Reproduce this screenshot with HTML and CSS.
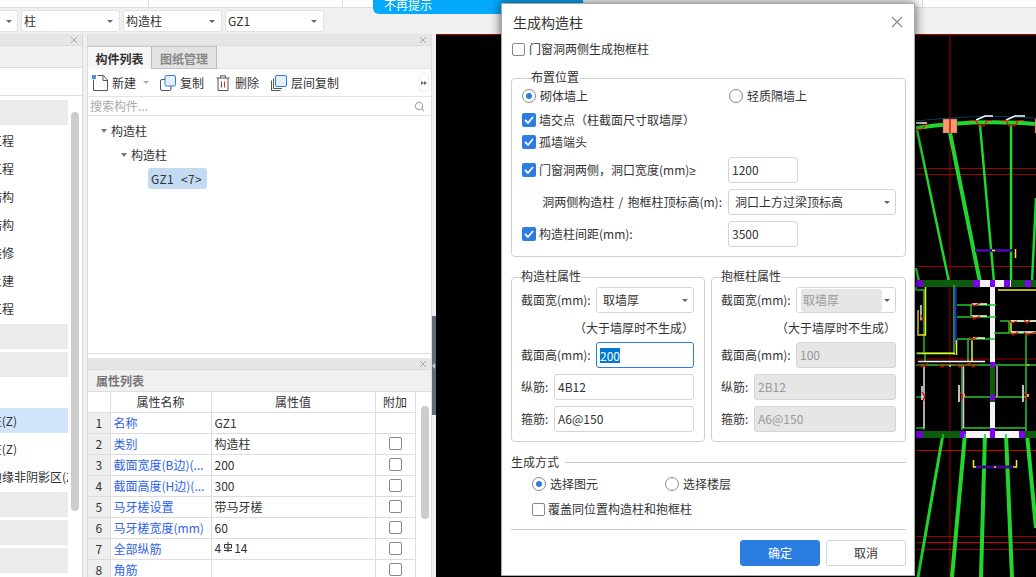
FILE: index.html
```html
<!DOCTYPE html>
<html lang="zh-CN">
<head>
<meta charset="utf-8">
<title>生成构造柱</title>
<link rel="stylesheet" href="styles.css">
</head>
<body>
<div class="page">
  <div class="topstrip">
    <div class="strip-cell strip-a"><span class="strip-text">图层</span></div>
    <div class="strip-cell strip-b"></div>
    <div class="strip-cell strip-c"></div>
    <div class="strip-end"></div>
  </div>
  <div class="banner"><span>不再提示</span></div>

  <div class="selectbar">
    <div class="tsel tsel-first"><i class="arrow"></i></div>
    <div class="tsel"><span>柱</span><i class="arrow"></i></div>
    <div class="tsel"><span>构造柱</span><i class="arrow"></i></div>
    <div class="tsel"><span>GZ1</span><i class="arrow"></i></div>
  </div>

  <div class="main">
    <aside class="leftcol">
      <div class="panelhead"><svg class="x" viewBox="0 0 8 8"><path d="M1 1l6 6M7 1L1 7"/></svg></div>
      <div class="left-tabs"></div>
      <div class="left-tools"></div>
      <div class="left-body">
        <div class="navlist">
          <div class="nav gray"></div>
          <div class="nav"><span>工程</span></div>
          <div class="nav"><span>工程</span></div>
          <div class="nav"><span>结构</span></div>
          <div class="nav"><span>结构</span></div>
          <div class="nav"><span>装修</span></div>
          <div class="nav"><span>土建</span></div>
          <div class="nav"><span>工程</span></div>
          <div class="nav gray"></div>
          <div class="nav gray"></div>
          <div class="nav"></div>
          <div class="nav sel z"><span>柱(Z)</span></div>
          <div class="nav z"><span>柱(Z)</span></div>
          <div class="nav long"><span>边缘非阴影区(Z)</span></div>
          <div class="nav gray"></div>
          <div class="nav gray"></div>
          <div class="nav gray"></div>
        </div>
        <div class="leftscroll"></div>
      </div>
    </aside>

    <section class="midcol">
      <div class="panelhead"><svg class="x" viewBox="0 0 8 8"><path d="M1 1l6 6M7 1L1 7"/></svg></div>
      <div class="tabs">
        <div class="tab on">构件列表</div>
        <div class="tab off">图纸管理</div>
      </div>
      <div class="tools">
        <svg class="ico" viewBox="0 0 16 16"><path class="ln" d="M1.500 4.500V15.500H15.500V5L11.500 .5H5.500"/><path class="ln" d="M11 1V5.500H15"/><rect class="dot" x="0" y="0" width="4" height="4"/></svg>
        <span class="tool t-new">新建</span><i class="arrow tool-arrow"></i>
        <svg class="ico ico-copy" viewBox="0 0 16 16"><rect class="ln" x=".5" y="4.500" width="10.500" height="11" rx="1.500"/><rect class="bl" x="5" y=".5" width="10.500" height="10.500" rx="1.500"/></svg>
        <span class="tool">复制</span>
        <svg class="ico ico-del" viewBox="0 0 14 16"><path class="ln" d="M.5 3H13.500M4.500 3V.8H9.500V3M2 3V15.500H12V3"/><path class="rd" d="M5.500 6.500V12.500M8.500 6.500V12.500"/></svg>
        <span class="tool">删除</span>
        <svg class="ico ico-floor" viewBox="0 0 16 16"><path class="ln" d="M.5 5.500V15.500H9.500M2.500 3.500V13.500H11"/><rect class="bl" x="4.500" y=".5" width="11" height="11" rx="1.500"/></svg>
        <span class="tool">层间复制</span>
        <div class="more"><i></i><i></i></div>
      </div>
      <div class="search">
        <span>搜索构件...</span>
        <svg class="mag" viewBox="0 0 12 12"><circle cx="5.500" cy="5.500" r="4"/><path d="M8.500 8.500L11 11"/></svg>
      </div>
      <div class="tree">
        <div class="tree-row lv1"><i class="arrow"></i><span>构造柱</span></div>
        <div class="tree-row lv2"><i class="arrow"></i><span>构造柱</span></div>
        <div class="tree-row lv3"><span class="leaf">GZ1 &lt;7&gt;</span></div>
      </div>
      <div class="panelhead panelhead-prop"><svg class="x" viewBox="0 0 8 8"><path d="M1 1l6 6M7 1L1 7"/></svg></div>
      <div class="prop-title">属性列表</div>
      <div class="prop-body">
        <table class="props">
          <colgroup><col class="c1"><col class="c2"><col class="c3"><col class="c4"></colgroup>
          <tr class="hd"><th></th><th>属性名称</th><th>属性值</th><th>附加</th></tr>
          <tr><td class="n">1</td><td class="k">名称</td><td class="v">GZ1</td><td></td></tr>
          <tr><td class="n">2</td><td class="k">类别</td><td class="v">构造柱</td><td class="c"><i class="box"></i></td></tr>
          <tr><td class="n">3</td><td class="k">截面宽度(B边)(...</td><td class="v">200</td><td class="c"><i class="box"></i></td></tr>
          <tr><td class="n">4</td><td class="k">截面高度(H边)(...</td><td class="v">300</td><td class="c"><i class="box"></i></td></tr>
          <tr><td class="n">5</td><td class="k">马牙槎设置</td><td class="v">带马牙槎</td><td class="c"><i class="box"></i></td></tr>
          <tr><td class="n">6</td><td class="k">马牙槎宽度(mm)</td><td class="v">60</td><td class="c"><i class="box"></i></td></tr>
          <tr><td class="n">7</td><td class="k">全部纵筋</td><td class="v">4<svg class="rebar" viewBox="0 0 10 10"><path d="M5 0V10M1 8.500H9M1.500 2.500H8.500V6H1.500Z"/></svg>14</td><td class="c"><i class="box"></i></td></tr>
          <tr><td class="n">8</td><td class="k">角筋</td><td class="v"></td><td class="c"><i class="box"></i></td></tr>
        </table>
        <div class="propscroll"></div>
      </div>
    </section>

    <div class="handle">
      <div class="grip"><i></i></div>
    </div>

    <div class="canvas">
      <svg class="cad" viewBox="436 34 600 543" preserveAspectRatio="none">
        <g class="red-d">
          <path d="M436 34.500H1036"/>
          <path d="M950 34V577"/>
          <path d="M916 168.500H1036M916 174.500H1036M916 266.500H1036M916 359H1036M916 536.500H1036M916 549.500H1036"/>
        </g>
        <path class="red-b" d="M916 450.500H1036M916 542.500H1036"/>
        <path class="navy" d="M916 121Q975 114 1036 118"/>
        <g class="g4">
          <path d="M916 128Q975 119 1036 124"/>
          <path d="M950 133L980 282"/>
          <path d="M943 434L918 577" stroke-width="3"/>
          <path d="M965 434L952 577"/>
          <path d="M985 434L981 577"/>
          <path d="M1006 434L1012 577"/>
          <path d="M1027 434L1036 528"/>
        </g>
        <g class="g3">
          <path d="M917 130L949 282"/>
          <path d="M980 125L994 282"/>
          <path d="M1011 125V282"/>
          <path d="M1036 198L1032 282"/>
          <path d="M916 268L919 282"/>
        </g>
        <rect class="salmon" x="943" y="119" width="14" height="14"/>
        <path class="red-v" d="M950 119V133"/>
        <rect class="salmon" x="1035" y="119" width="4" height="14"/>
        <g class="tag">
          <path d="M976 120L985 116H993"/>
          <path d="M1006 120L1015 116H1025"/>
          <path d="M916 123H927"/>
        </g>
        <g class="trap">
          <path d="M969 120.500H976L979 126H984L987 120.500H992"/>
          <path d="M1000 120.500H1006L1009 126H1015L1018 120.500H1024"/>
          <path d="M916 130L922 129L926 124H928"/>
        </g>
        <rect class="dgreen" x="916" y="280" width="120" height="7"/>
        <rect class="purple" x="916" y="280" width="7" height="7"/>
        <rect class="purple" x="973" y="280" width="7" height="7"/>
        <rect class="white" x="980" y="280" width="31" height="7"/>
        <rect class="purple" x="990" y="280" width="5" height="10"/>
        <rect class="purple" x="1004" y="280" width="6" height="7"/>
        <rect class="purple" x="1025" y="280" width="6" height="7"/>
        <path class="dpur" d="M975 250.500H1012"/>
        <path class="yel" d="M1015.500 249V258M992 250.500H995"/>
        <path class="yel" d="M998 290H1036"/>
        <rect class="white" x="990" y="287" width="5" height="75"/>
        <g class="g2">
          <path d="M957 305H996M957 317H996M971 305V317"/>
          <path d="M957 339H995M968 339V361"/>
          <path d="M1000 321H1036M994 333H1036M1009 321V333"/>
          <path d="M916 287V290H924V353M954 285V355M916 353H954M925 353V362"/>
          <path d="M916 365H1036"/>
          <path d="M924 365V430M962 365V430M1026 365V431"/>
          <path d="M962 397H990M995 397H1026M916 397H924"/>
          <path d="M962 428H1026M916 428H924"/>
          <path d="M1026 333V365"/>
        </g>
        <path class="blue" d="M955.500 287V345"/>
        <path class="yel" d="M925.500 287V335H918V310M956.500 340V355M917 353.500H955M972 340V361M1011 322V333"/>
        <rect class="dgreen" x="990" y="365" width="5" height="37"/>
        <rect class="purple" x="990" y="362" width="5" height="5"/>
        <rect class="purple" x="990" y="395" width="5" height="5"/>
        <rect class="white" x="990" y="402" width="5" height="29"/>
        <path class="pink" d="M963.500 366V428M997 366V397M924 366V428"/>
        <path class="tag" d="M918 361.500H985"/>
        <path class="tag" d="M1011 321H1036M1011 332H1036M971 304H987M971 316H987M973 338H985"/>
        <path class="tag" d="M921 305V320M959 385V402M1023 385V402M922 386V400"/>
        <g class="trap">
          <path d="M917 364L923 367L928 363M938 364L942 367L947 364M955 364L960 367L970 363L973 367L978 364"/>
          <path d="M971 303L974 306L980 303M971 316L974 319L980 316M969 337L972 340L977 337"/>
          <path d="M1009 320L1012 323L1017 321M1024 320L1027 323L1030 320M1010 332L1013 335L1018 332M1024 332L1027 335L1036 332"/>
          <path d="M922 392L925 396L923 401M960 392L963 396L961 401M1024 392L1027 396L1025 401M921 315L923 320L920 321"/>
        </g>
        <path class="orange" d="M964 394V397M1028 364V366M1028 394V397M950 365V367"/>
        <rect class="dgreen" x="916" y="431" width="120" height="7"/>
        <rect class="white" x="966" y="431" width="54" height="7"/>
        <rect class="purple" x="916" y="431" width="7" height="7"/>
        <rect class="purple" x="960" y="431" width="6" height="7"/>
        <rect class="purple" x="990" y="428" width="5" height="10"/>
        <rect class="purple" x="1019" y="431" width="6" height="7"/>
        <path class="dpur" d="M976 467H1012"/>
        <path class="yel" d="M973.500 460V467H976M1016.500 460V467H1013M994 467H996"/>
        <path class="g2" d="M943 434V438M965 434V438M985 434V438M1006 434V438"/>
      </svg>
    </div>
  </div>

  <div class="dialog">
    <div class="dlg-title">
      <span>生成构造柱</span>
      <svg class="dlg-x" viewBox="0 0 12 12"><path d="M1 1L11 11M11 1L1 11"/></svg>
    </div>
    <label class="line top-check"><i class="box"></i><span>门窗洞两侧生成抱框柱</span></label>

    <div class="group g-place">
      <div class="legend">布置位置</div>
      <div class="row r-radio">
        <div class="radio-item w207"><i class="radio on"></i><span>砌体墙上</span></div>
        <div class="radio-item"><i class="radio"></i><span>轻质隔墙上</span></div>
      </div>
      <div class="row r-c1"><i class="box on"><svg viewBox="0 0 14 14"><path d="M3 7l3 3 5-6"/></svg></i><span>墙交点（柱截面尺寸取墙厚）</span></div>
      <div class="row r-c2"><i class="box on"><svg viewBox="0 0 14 14"><path d="M3 7l3 3 5-6"/></svg></i><span>孤墙端头</span></div>
      <div class="row r-in">
        <div class="w206"><i class="box on"><svg viewBox="0 0 14 14"><path d="M3 7l3 3 5-6"/></svg></i><span>门窗洞两侧，洞口宽度(mm)<span class="ge">≥</span></span></div>
        <div class="field w70">1200</div>
      </div>
      <div class="row r-in">
        <div class="w206 right">洞两侧构造柱 / 抱框柱顶标高(m):</div>
        <div class="field sel w168"><span>洞口上方过梁顶标高</span><i class="arrow"></i></div>
      </div>
      <div class="row r-in">
        <div class="w206"><i class="box on"><svg viewBox="0 0 14 14"><path d="M3 7l3 3 5-6"/></svg></i><span>构造柱间距(mm):</span></div>
        <div class="field w70">3500</div>
      </div>
    </div>

    <div class="pair">
      <div class="group g-prop g-left">
        <div class="legend">构造柱属性</div>
        <div class="row r-p1"><div class="lab75">截面宽(mm):</div><div class="field sel grow sel-pad"><span>取墙厚</span><i class="arrow"></i></div></div>
        <div class="hint">（大于墙厚时不生成）</div>
        <div class="row r-in"><div class="lab75">截面高(mm):</div><div class="field grow focus"><span class="picked">200</span></div></div>
        <div class="row r-in"><div class="lab33">纵筋:</div><div class="field grow">4B12</div></div>
        <div class="row r-in"><div class="lab33">箍筋:</div><div class="field grow">A6@150</div></div>
      </div>
      <div class="group g-prop g-right">
        <div class="legend">抱框柱属性</div>
        <div class="row r-p1"><div class="lab75">截面宽(mm):</div><div class="field sel grow off-sel"><span class="off-inner">取墙厚</span><i class="arrow"></i></div></div>
        <div class="hint">（大于墙厚时不生成）</div>
        <div class="row r-in"><div class="lab75">截面高(mm):</div><div class="field grow off">100</div></div>
        <div class="row r-in"><div class="lab33">纵筋:</div><div class="field grow off">2B12</div></div>
        <div class="row r-in"><div class="lab33">箍筋:</div><div class="field grow off">A6@150</div></div>
      </div>
    </div>

    <div class="how"><span>生成方式</span><i class="rule"></i></div>
    <div class="row r-how">
      <div class="radio-item w133"><i class="radio on"></i><span>选择图元</span></div>
      <div class="radio-item"><i class="radio"></i><span>选择楼层</span></div>
    </div>
    <div class="row r-over"><i class="box"></i><span>覆盖同位置构造柱和抱框柱</span></div>
    <div class="divider"></div>
    <div class="actions">
      <div class="btn primary">确定</div>
      <div class="btn">取消</div>
    </div>
  </div>
</div>
</body>
</html>
```

FILE: styles.css
```css
* { box-sizing: border-box; }
html, body { margin: 0; padding: 0; }
body {
  width: 1036px;
  height: 577px;
  overflow: hidden;
  font: 12px/16px "Noto Sans CJK SC", "Noto Sans", sans-serif;
  color: #333;
  background: #f0f0f0;
  text-spacing-trim: space-all;
}
i { display: block; font-style: normal; }
.page { position: relative; width: 1036px; height: 577px; overflow: hidden; display: flex; flex-direction: column; }

/* top strip */
.topstrip { height: 8px; flex: none; display: flex; background: #fff; border-bottom: 1px solid #ddd; overflow: hidden; }
.strip-cell { height: 7px; border-right: 1px solid #ddd; overflow: hidden; }
.strip-a { width: 149px; padding-left: 23px; }
.strip-b { width: 194px; }
.strip-c { width: 580px; padding-left: 536px; }
.strip-end { flex: 1; }
.strip-text { display: block; margin-top: -14px; }
.banner {
  position: absolute; left: 373px; top: 0; width: 210px; height: 14px;
  background: #03a9fb; border-bottom-left-radius: 6px; color: #fff;
  padding-left: 11px; overflow: hidden; font-size: 12px; line-height: 9px;
}

/* select bar */
.selectbar { height: 26px; flex: none; display: flex; gap: 3px; padding-top: 2px; }
.tsel {
  position: relative; width: 99px; height: 22px; background: #fff; border: 1px solid #e2e2e2;
  border-radius: 3px; padding-left: 2px; line-height: 20px; display: flex; align-items: center; justify-content: space-between; padding-right: 6px;
}
.tsel-first { width: 18px; border-left: 0; border-radius: 0 3px 3px 0; justify-content: flex-end; margin-right: 0; padding-right: 5px; }
.arrow { width: 0; height: 0; border-left: 3px solid transparent; border-right: 3px solid transparent; border-top: 3px solid #666; }

/* main */
.main { flex: 1; display: flex; min-height: 0; }
.leftcol { width: 83px; flex: none; margin-right: 4px; background: #fff; border-right: 1px solid #d8d8d8; overflow: hidden; }
.panelhead { height: 12px; background: #e6e6e6; border-bottom: 1px solid #ddd; display: flex; justify-content: flex-end; align-items: center; padding-right: 4px; }
.x { width: 8px; height: 8px; fill: none; stroke: #aaa; stroke-width: 1; }
.left-tabs { height: 22px; background: #f0f0f0; border-bottom: 1px solid #ddd; }
.left-tools { height: 28px; background: #fff; border-bottom: 1px solid #ddd; }
.left-body { display: flex; padding-top: 4px; gap: 3px; }
.navlist { width: 68px; flex: none; display: flex; flex-direction: column; gap: 3px; overflow: hidden; }
.nav { height: 25px; flex: none; display: flex; justify-content: flex-end; align-items: center; padding-right: 54px; white-space: nowrap; overflow: hidden; }
.nav.gray { background: #ebebeb; }
.nav.z { padding-right: 51px; }
.nav.sel { background: #d0e4fb; }
.nav.long { justify-content: flex-start; padding: 0 0 0 0; }
.nav.long span { margin-left: -10px; }
.leftscroll { width: 8px; height: 399px; margin-top: 12px; background: #ccc; border-radius: 4px; flex: none; }

/* mid column */
.midcol { width: 345px; flex: none; background: #fff; display: flex; flex-direction: column; overflow: hidden; border-left: 1px solid #ddd; border-right: 1px solid #ddd; }
.tabs { height: 23px; flex: none; display: flex; background: #f0f0f0; border-bottom: 1px solid #e2e2e2; }
.tab { width: 64px; height: 23px; font-weight: 700; text-align: center; line-height: 23px; }
.tab.on { background: #f6f6f6; border-top: 1px solid #ccc; border-right: 1px solid #bbb; }
.tab.off { background: #e2e2e2; color: #888; border-top: 1px solid #c4c4c4; border-right: 1px solid #bbb; border-bottom: 1px solid #c4c4c4; width: 65px; }
.tools { height: 28px; flex: none; display: flex; align-items: center; padding-left: 4px; border-bottom: 1px solid #e2e2e2; background: #fff; }
.ico { width: 16px; height: 16px; flex: none; fill: none; }
.ln { fill: none; stroke: #555; stroke-width: 1; }
.bl { fill: #e3effc; stroke: #2b7de1; stroke-width: 1; }
.rd { fill: none; stroke: #d22; stroke-width: 1; }
.dot { fill: #4a90e2; }
.tool { margin-left: 4px; line-height: 16px; white-space: nowrap; }
.t-new { margin-left: 4px; }
.tool-arrow { margin-left: 7px; border-top-color: #aaa; }
.ico-copy { margin-left: 11px; }
.ico-del { margin-left: 12px; width: 14px; }
.ico-del + .tool { margin-left: 5px; }
.ico-floor { margin-left: 12px; }
.more { margin-left: auto; margin-right: 2px; width: 10px; height: 19px; border: 1px solid #eee; border-radius: 3px; display: flex; align-items: center; justify-content: center; }
.more i { width: 0; height: 0; border-top: 2.500px solid transparent; border-bottom: 2.500px solid transparent; border-left: 3px solid #666; }
.search { height: 19px; flex: none; display: flex; align-items: center; justify-content: space-between; padding: 0 6px 0 2px; color: #aaa; border-bottom: 1px solid #e2e2e2; }
.mag { width: 11px; height: 11px; fill: none; stroke: #aaa; stroke-width: 1.300; }
.tree { height: 238px; flex: none; border-bottom: 1px solid #ddd; padding-top: 3px; }
.tree-row { display: flex; align-items: center; height: 24px; }
.lv1 { padding-left: 13px; }
.lv2 { padding-left: 33px; }
.tree-row .arrow { border-left-width: 3px; border-right-width: 3px; border-top: 4px solid #777; margin-right: 4px; }
.lv3 { padding-left: 60px; height: 21px; margin-top: 1px; }
.leaf { display: block; width: 59px; height: 21px; line-height: 21px; background: #c3daf3; border-radius: 3px; padding-left: 3px; white-space: pre; word-spacing: 4px; letter-spacing: .3px; }
.panelhead-prop { margin-top: 4px; box-shadow: -1px 0 0 #ddd; }
.prop-title { height: 22px; flex: none; background: #f0f0f0; border-bottom: 1px solid #ddd; padding-left: 8px; line-height: 21px; font-weight: 700; color: #777; }
.prop-body { display: flex; flex: 1; min-height: 0; overflow: hidden; align-items: flex-start; }
.props { width: 327px; flex: none; table-layout: fixed; border-collapse: collapse; }
.c1 { width: 22px; }
.c2 { width: 101px; }
.c3 { width: 164px; }
.c4 { width: 40px; }
.props th, .props td { height: 21px; padding: 0; border: 1px solid #ddd; font-weight: 400; line-height: 16px; white-space: nowrap; overflow: hidden; }
.props tr:first-child th { border-top: 0; height: 20px; }
.props th:first-child, .props td:first-child { border-left: 0; }
.props .n { text-align: center; background: #eee; }
.props .k { color: #2f63ee; padding-left: 3px; }
.props .v { padding-left: 3px; }
.props .c { text-align: center; }
.props .c .box { margin: 0 auto; }
.rebar { display: inline-block; width: 10px; height: 10px; margin: 0 1px 5px 2px; vertical-align: middle; fill: none; stroke: #333; stroke-width: 1; }
.propscroll { width: 8px; height: 113px; flex: none; margin: 14px 0 0 5px; background: #ccc; border-radius: 4px; }

/* handle */
.handle { width: 4px; flex: none; padding-top: 282px; background: #f0f0f0; }
.grip { width: 4px; height: 99px; background: #5f6b76; display: flex; align-items: center; }
.grip i { width: 0; height: 0; border-top: 3px solid transparent; border-bottom: 3px solid transparent; border-right: 3px solid #c5cad0; }

/* canvas */
.canvas { flex: 1; background: #000; overflow: hidden; }
.cad { display: block; width: 600px; height: 543px; fill: none; }
.red-d { stroke: #a00000; stroke-width: 1; fill: none; }
.red-b { stroke: #d00000; stroke-width: 1; fill: none; }
.red-v { stroke: #e03020; stroke-width: 2; }
.navy { stroke: #103a5a; stroke-width: 1; fill: none; }
.g4 { stroke: #21d62e; stroke-width: 4; fill: none; }
.g3 { stroke: #21d62e; stroke-width: 2.500; fill: none; }
.g2 { stroke: #21c62e; stroke-width: 1.500; fill: none; }
.salmon { fill: #ff9a70; stroke: #666; stroke-width: .5; }
.tag { stroke: #fff; stroke-width: 1.500; fill: none; }
.trap { stroke: #f00000; stroke-width: 1.200; fill: none; }
.dgreen { fill: #0b5c0b; }
.purple { fill: #8000f0; }
.white { fill: #f4f4f4; }
.dpur { stroke: #3e0a8e; stroke-width: 3; fill: none; }
.yel { stroke: #f5ee2a; stroke-width: 1.500; fill: none; }
.blue { stroke: #2030c8; stroke-width: 2; fill: none; }
.pink { stroke: #e8b8e8; stroke-width: 1.500; fill: none; }
.orange { stroke: #ff9a40; stroke-width: 2; fill: none; }

/* dialog */
.dialog {
  position: absolute; left: 501px; top: 3px; width: 414px; height: 573px;
  background: #fff; border: 1px solid #aaa; box-shadow: 0 0 10px rgba(0, 0, 0, .65);
  padding: 0 8px 0 9px; display: flex; flex-direction: column;
}
.dlg-title { height: 38px; flex: none; display: flex; align-items: center; justify-content: space-between; padding: 0 3px 3px 2px; font-size: 14px; }
.dlg-x { width: 12px; height: 12px; fill: none; stroke: #888; stroke-width: 1.100; }
.box { width: 13px; height: 13px; flex: none; border: 1px solid #888; border-radius: 2px; background: #fff; }
.box.on { width: 14px; height: 14px; border: 0; background: #2b7de1; border-radius: 2px; }
.box.on svg { display: block; width: 14px; height: 14px; fill: none; stroke: #fff; stroke-width: 1.800; }
.line { display: flex; align-items: center; height: 14px; flex: none; padding-left: 1px; gap: 4px; }
.group { border: 1px solid #d0d0d0; border-radius: 4px; flex: none; }
.legend { width: max-content; height: 16px; margin: -10px 0 0 9px; background: #fff; padding: 0; }
.g-place { margin-top: 22px; height: 179px; padding: 0 9px 9px 10px; }
.g-place .legend { margin-left: -1px; margin-left: 9px; }
.row { display: flex; align-items: center; flex: none; }
.r-radio { height: 20px; margin-top: 1px; }
.radio-item { display: flex; align-items: center; gap: 4px; }
.w207 { width: 207px; }
.w133 { width: 133px; }
.radio { width: 14px; height: 14px; flex: none; border: 1px solid #888; border-radius: 50%; background: #fff; position: relative; display: flex; align-items: center; justify-content: center; }
.radio.on::after { content: ""; width: 6px; height: 6px; border-radius: 50%; background: #2b7de1; }
.r-c1 { height: 20px; margin-top: 4px; gap: 3px; }
.r-c2 { height: 20px; margin-top: 2px; gap: 3px; }
.r-in { height: 26px; margin-top: 6px; }
.r-c2 + .r-in { margin-top: 5px; }
.w206 { width: 206px; flex: none; display: flex; align-items: center; gap: 3px; white-space: nowrap; }
.w206.right { justify-content: flex-end; padding-right: 6px; word-spacing: 1.500px; }
.ge { font-family: "Noto Sans", sans-serif; }
.field { height: 26px; border: 1px solid #d4d4d4; border-radius: 3px; padding-left: 3px; line-height: 24px; display: flex; align-items: center; background: #fff; }
.w70 { width: 70px; }
.w168 { width: 168px; }
.field.sel { justify-content: space-between; padding: 0 5px 0 6px; }
.grow { flex: 1; min-width: 0; }
.pair { display: flex; gap: 6px; margin-top: 20px; flex: none; }
.g-prop { height: 165px; padding: 0 10px 9px 9px; }
.g-left { width: 194px; }
.g-right { width: 195px; padding-right: 9px; }
.g-prop .legend { margin-left: 0; }
.r-p1 { height: 26px; margin-top: 3px; }
.lab75 { width: 75px; flex: none; white-space: nowrap; }
.lab33 { width: 33px; flex: none; white-space: nowrap; }
.hint { height: 16px; margin-top: 7px; text-align: right; white-space: nowrap; }
.g-prop .hint + .r-in { margin-top: 6px; }
.field.focus { border-color: #2b7de1; }
.picked { background: #0078d7; color: #fff; line-height: 15px; height: 15px; display: block; }
.field.off { background: #e6e6e6; color: #999; }
.off-sel { padding: 0 5px 0 4px !important; color: #999; }
.off-inner { display: block; width: 81px; height: 23px; line-height: 22px; background: #e6e6e6; border-radius: 3px; padding-left: 2px; }
.how { display: flex; align-items: center; height: 16px; margin-top: 12px; flex: none; gap: 6px; }
.rule { flex: 1; height: 1px; background: #ccc; }
.r-how { height: 20px; margin-top: 4px; padding-left: 21px; }
.r-over { height: 20px; margin-top: 5px; padding-left: 21px; gap: 3px; }
.divider { height: 1px; background: #ccc; margin-top: 10px; flex: none; }
.actions { display: flex; justify-content: flex-end; gap: 6px; margin-top: 10px; flex: none; }
.btn { width: 80px; height: 26px; border: 1px solid #d4d4d4; border-radius: 3px; text-align: center; line-height: 24px; background: #fff; }
.btn.primary { background: #2b7de1; border-color: #2b7de1; color: #fff; }
```
